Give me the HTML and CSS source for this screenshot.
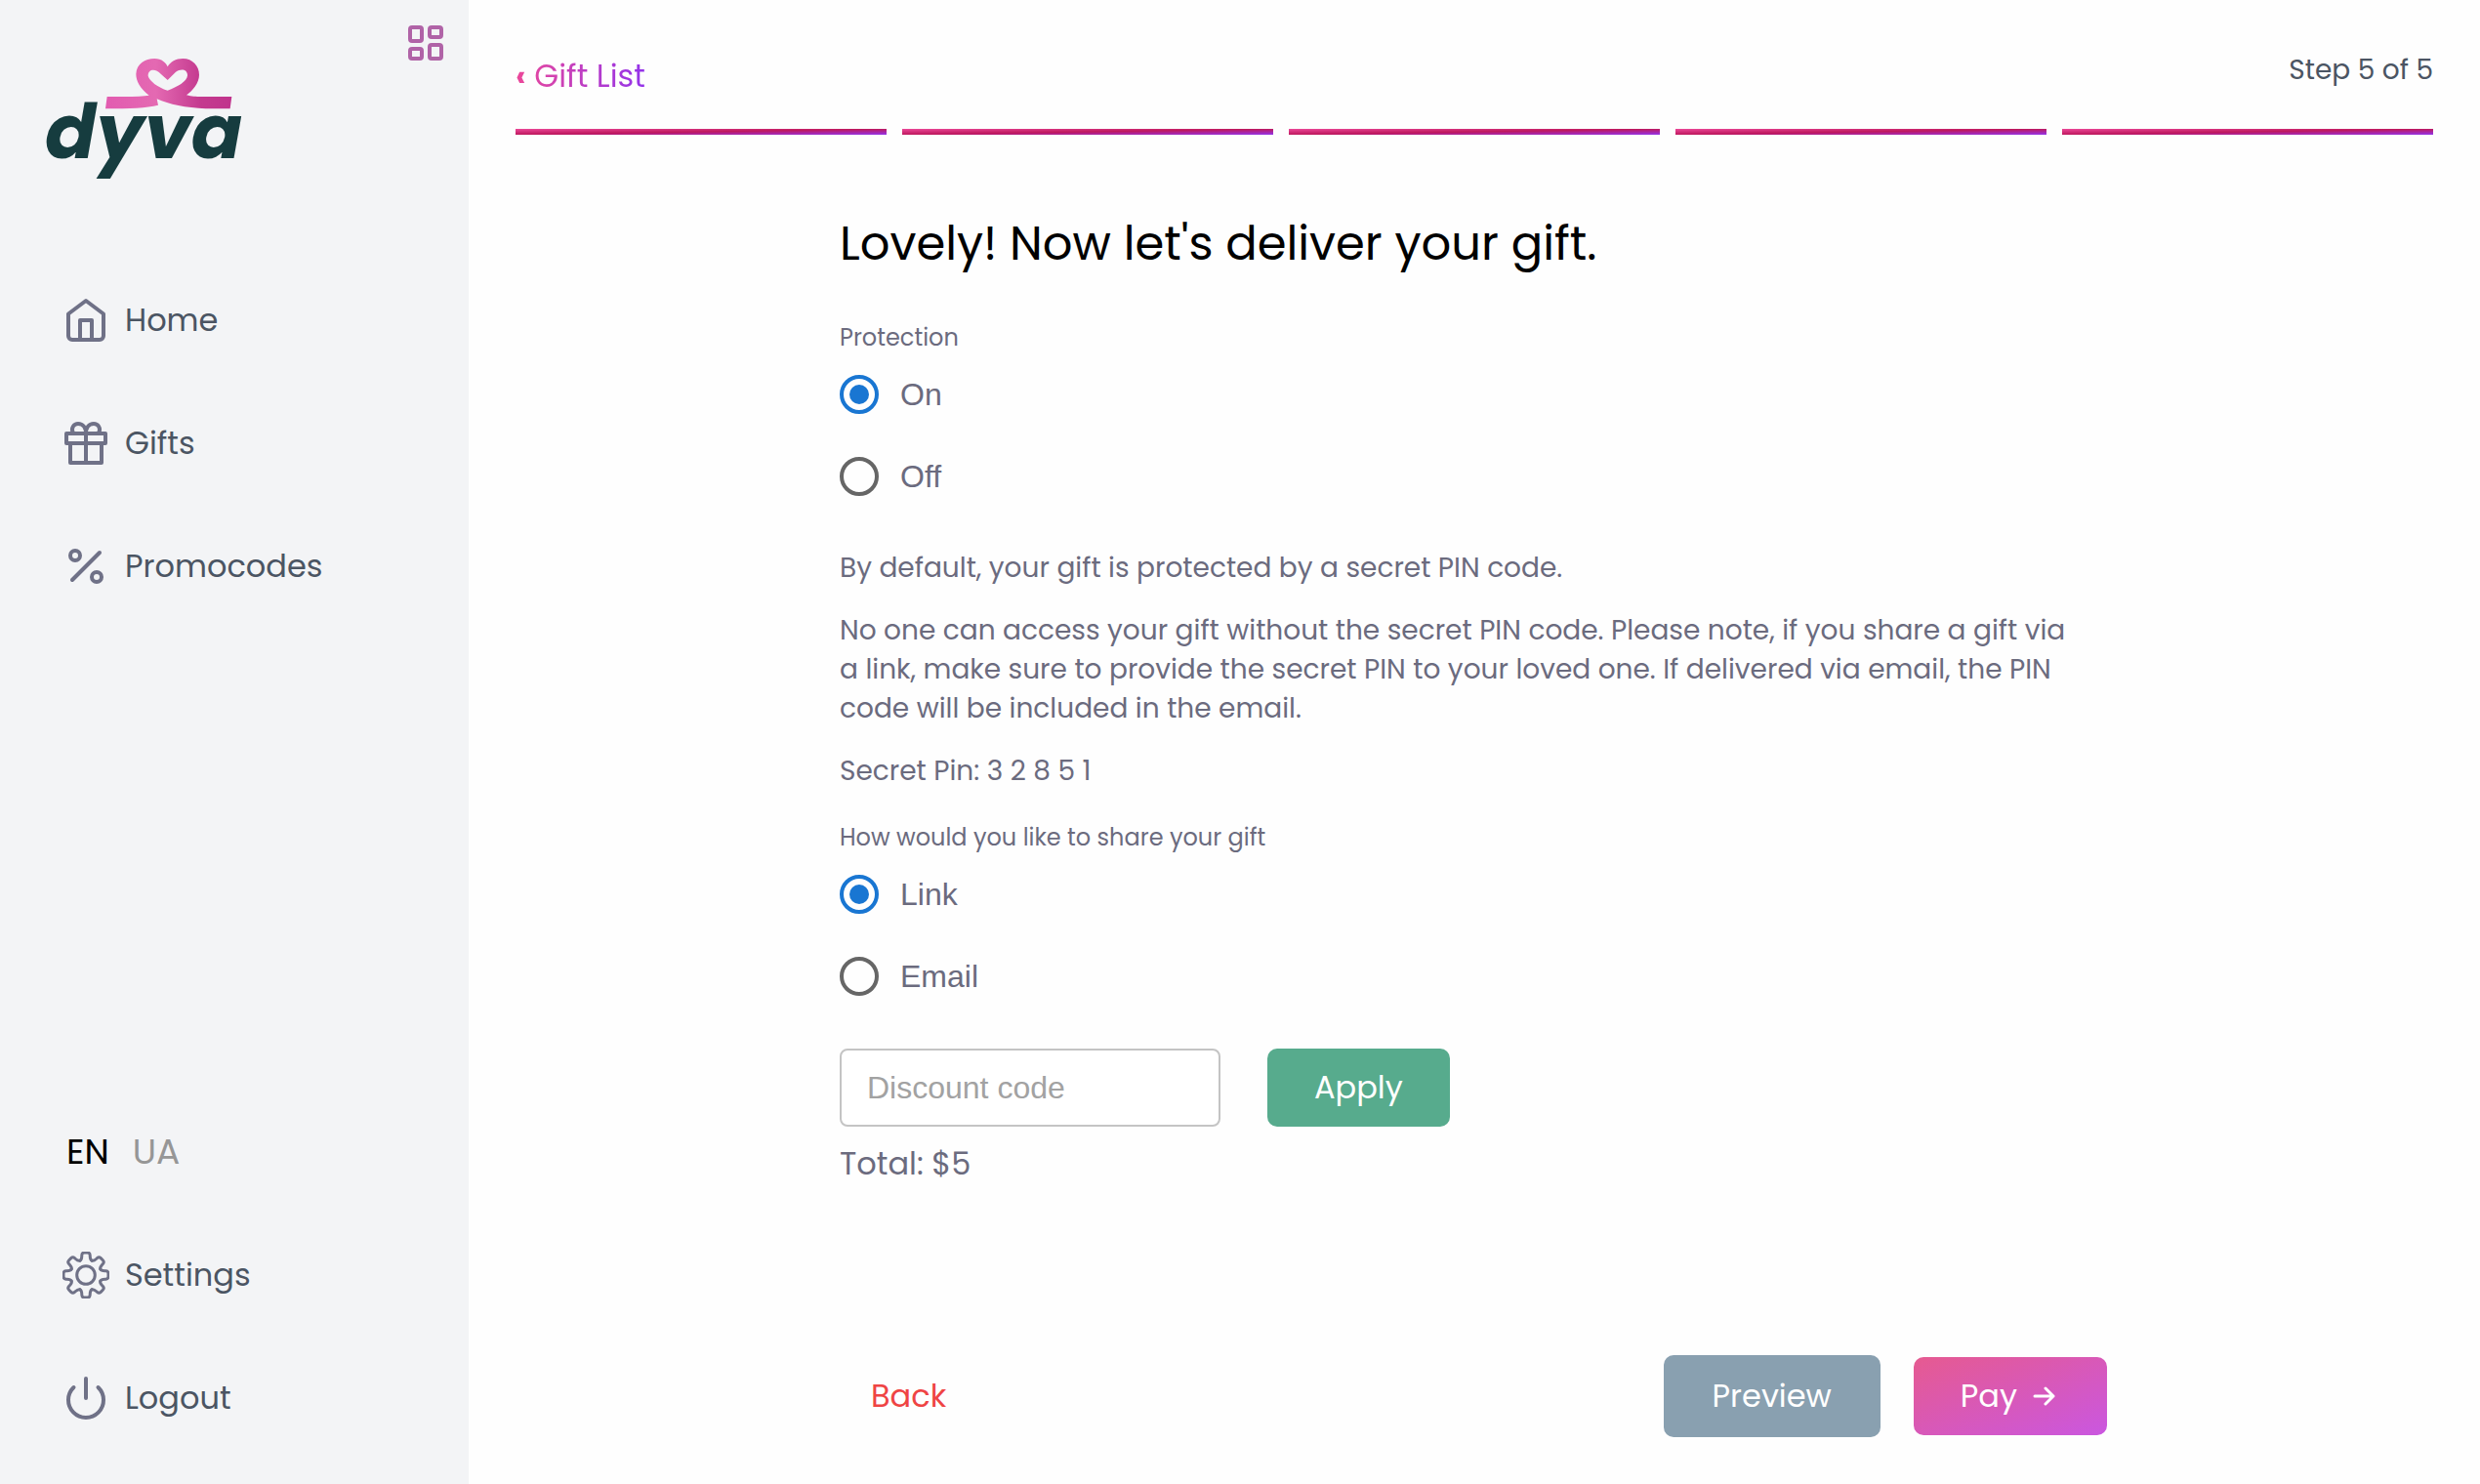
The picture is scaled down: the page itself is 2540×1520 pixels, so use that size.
FILE: index.html
```
<!DOCTYPE html>
<html lang="en">
<head>
    <meta charset="UTF-8">
    <meta name="viewport" content="width=device-width, initial-scale=1.0">
    <title>Dyva - Gift delivery</title>
    <link rel="stylesheet" href="styles.css">
</head>
<body>
    <div class="layout">
        <aside class="sidebar">
            <div class="sidebar-top">
                <a href="#" class="logo" aria-label="dyva">
                    <svg width="198" height="120" viewBox="144 180 594 360">
                        <defs>
                            <linearGradient id="ribbon" x1="0" y1="0" x2="1" y2="0">
                                <stop offset="0" stop-color="#e25bb0"/>
                                <stop offset="0.4" stop-color="#e469b2"/>
                                <stop offset="0.75" stop-color="#c43a8f"/>
                                <stop offset="1" stop-color="#c0338c"/>
                            </linearGradient>
                        </defs>
                        <path fill="url(#ribbon)" fill-rule="evenodd" d="M458 293C430 270 418 250 418 227C420 196 445 180 475 180C497 180 510 193 515 205C523 190 540 180 562 180C592 180 612 203 612 230C612 255 592 278 573 292C590 297 600 297 620 297H712L707 334H632C570 331 520 321 482 304L486 323C450 332 400 334 324 334L329 297H380Q435 297 458 293ZM515 246L494 227C478 210 455 212 455 233C460 250 485 268 515 278C545 268 575 250 576 232C576 212 555 211 540 221Z"/>
                        <text class="logo-text" x="138" y="487">dyva</text>
                    </svg>
                </a>
                <button class="menu-toggle" aria-label="Toggle menu">
                    <svg width="36" height="36" viewBox="0 0 36 36" fill="none" stroke="currentColor" stroke-width="4">
                        <rect x="2" y="2" width="12" height="14" rx="2"/>
                        <rect x="22" y="2" width="12" height="10" rx="2"/>
                        <rect x="2" y="24" width="12" height="10" rx="2"/>
                        <rect x="22" y="20" width="12" height="14" rx="2"/>
                    </svg>
                </button>
            </div>

            <nav class="nav">
                <a href="#" class="nav-link">
                    <svg class="icon" viewBox="0 0 48 48">
                        <path d="M6 17.5L24 4L42 17.5V40a4 4 0 0 1-4 4H10a4 4 0 0 1-4-4Z"/>
                        <path d="M18 44V24H30V44"/>
                    </svg>
                    Home
                </a>
                <a href="#" class="nav-link">
                    <svg class="icon" viewBox="0 0 48 48">
                        <path d="M4 14H44V24H4ZM8 24V44H40V24M24 14V44"/>
                        <path d="M11 14C8 8 12 4 16 4C21 4 24 8 24 14C24 8 27 4 32 4C36 4 40 8 37 14"/>
                    </svg>
                    Gifts
                </a>
                <a href="#" class="nav-link">
                    <svg class="icon" viewBox="0 0 48 48">
                        <circle cx="13" cy="13" r="5"/>
                        <circle cx="35" cy="35" r="5"/>
                        <path d="M10 38L38 10"/>
                    </svg>
                    Promocodes
                </a>
            </nav>

            <div class="nav nav-bottom">
                <div class="languages">
                    <button class="language active">EN</button>
                    <button class="language">UA</button>
                </div>
                <a href="#" class="nav-link">
                    <svg class="icon icon-thin" viewBox="-24 -24 48 48">
                        <defs>
                            <path id="tooth" d="M-6.1 -14.8C-4.6 -15.5 -4.3 -17 -4.2 -19.5V-20.5Q-4 -23 -1.5 -23H1.5Q4 -23 4.2 -20.5V-19.5C4.3 -17 4.6 -15.5 6.1 -14.8"/>
                        </defs>
                        <use href="#tooth"/>
                        <use href="#tooth" transform="rotate(45)"/>
                        <use href="#tooth" transform="rotate(90)"/>
                        <use href="#tooth" transform="rotate(135)"/>
                        <use href="#tooth" transform="rotate(180)"/>
                        <use href="#tooth" transform="rotate(225)"/>
                        <use href="#tooth" transform="rotate(270)"/>
                        <use href="#tooth" transform="rotate(315)"/>
                        <circle r="9.3"/>
                    </svg>
                    Settings
                </a>
                <a href="#" class="nav-link">
                    <svg class="icon" viewBox="0 0 48 48">
                        <path d="M24 4V24M11.5 13A18 18 0 1 0 36.5 13"/>
                    </svg>
                    Logout
                </a>
            </div>
        </aside>

        <main class="main">
            <header class="header">
                <a href="#" class="back-link"><b>‹</b> Gift List</a>
                <span class="step">Step 5 of 5</span>
            </header>
            <div class="progress">
                <span></span>
                <span></span>
                <span></span>
                <span></span>
                <span></span>
            </div>

            <form class="content">
                <h1>Lovely! Now let's deliver your gift.</h1>

                <fieldset class="options">
                    <legend>Protection</legend>
                    <label class="option">
                        <input type="radio" name="protection" value="on" checked>
                        On
                    </label>
                    <label class="option">
                        <input type="radio" name="protection" value="off">
                        Off
                    </label>
                </fieldset>

                <div class="info">
                    <p>By default, your gift is protected by a secret PIN code.</p>
                    <p>No one can access your gift without the secret PIN code. Please note, if you share a gift via a link, make sure to provide the secret PIN to your loved one. If delivered via email, the PIN code will be included in the email.</p>
                    <p>Secret Pin: 3 2 8 5 1</p>
                </div>

                <fieldset class="options">
                    <legend>How would you like to share your gift</legend>
                    <label class="option">
                        <input type="radio" name="share" value="link" checked>
                        Link
                    </label>
                    <label class="option">
                        <input type="radio" name="share" value="email">
                        Email
                    </label>
                </fieldset>

                <div class="discount">
                    <input type="text" class="discount-input" placeholder="Discount code" aria-label="Discount code">
                    <button type="button" class="btn btn-apply">Apply</button>
                </div>
                <p class="total">Total: $5</p>

                <div class="actions">
                    <button type="button" class="btn-back">Back</button>
                    <button type="button" class="btn btn-preview">Preview</button>
                    <button type="submit" class="btn btn-pay">
                        Pay
                        <svg width="28" height="20" viewBox="0 0 28 20">
                            <path d="M2 10H21M13 2L21 10L13 18"/>
                        </svg>
                    </button>
                </div>
            </form>
        </main>
    </div>
</body>
</html>
```

FILE: styles.css
```
* {
    box-sizing: border-box;
}

body {
    margin: 0;
    font-family: Poppins, Inter, sans-serif;
    font-size: 32px;
    line-height: 48px;
    color: #6b6b7e;
    background-color: #fefefe;
}

a {
    color: inherit;
    text-decoration: none;
}

button {
    font: inherit;
    border: none;
    padding: 0;
    background: none;
    cursor: pointer;
}

svg {
    display: block;
}

.layout {
    display: flex;
    min-height: 100vh;
}

/* Sidebar */
.sidebar {
    display: flex;
    flex-direction: column;
    flex: 0 0 480px;
    padding: 26px 26px 64px 48px;
    background-color: #f3f4f6;
    color: #4b5563;
}

.sidebar-top {
    display: flex;
    justify-content: space-between;
    align-items: flex-start;
}

.logo {
    padding-top: 34px;
}

.logo svg {
    overflow: visible;
}

.logo-text {
    font-size: 232px;
    font-weight: 700;
    font-style: italic;
    fill: #163c3f;
}

.menu-toggle {
    color: #b063a7;
}

.nav {
    display: flex;
    flex-direction: column;
    gap: 78px;
    margin-top: 124px;
    padding-left: 16px;
}

.nav-bottom {
    margin-top: auto;
}

.nav-link {
    display: flex;
    align-items: center;
    gap: 16px;
}

.icon {
    width: 48px;
    height: 48px;
    fill: none;
    stroke: #6f7187;
    stroke-width: 4;
    stroke-linecap: round;
    stroke-linejoin: round;
}

.icon-thin {
    stroke-width: 3;
}

.languages {
    display: flex;
    gap: 24px;
    padding-left: 4px;
    font-size: 36px;
}

.language {
    color: #969696;
}

.language.active {
    color: #000;
}

/* Main */
.main {
    flex: 1;
    padding: 48px;
}

.header {
    display: flex;
    justify-content: space-between;
    align-items: flex-start;
    height: 84px;
}

.back-link {
    padding-top: 6px;
    background: linear-gradient(to right, #ec4899, #9333ea);
    -webkit-background-clip: text;
    background-clip: text;
    color: transparent;
}

.step {
    font-size: 28px;
    color: #4b5563;
}

.progress {
    display: flex;
    gap: 16px;
}

.progress span {
    flex: 1;
    height: 6px;
    background: linear-gradient(to bottom right, #ec4899, #be185d, #9333ea);
}

.content {
    max-width: 1300px;
    margin: 76px auto 0;
}

h1 {
    margin: 0 0 44px;
    font-size: 48px;
    line-height: 72px;
    font-weight: 400;
    color: #000;
}

.options {
    margin: 0;
    padding: 0;
    border: none;
}

.options legend {
    padding: 0;
    font-size: 24px;
    line-height: 32px;
}

.option {
    display: flex;
    align-items: center;
    gap: 22px;
    height: 84px;
    font-family: "Liberation Sans", Arial, sans-serif;
}

.option input {
    appearance: none;
    display: grid;
    place-content: center;
    width: 40px;
    height: 40px;
    margin: 0;
    border: 4px solid #666;
    border-radius: 50%;
}

.option input:checked {
    border-color: #1976d2;
}

.option input:checked::before {
    content: "";
    width: 20px;
    height: 20px;
    border-radius: 50%;
    background-color: #1976d2;
}

.info {
    max-width: 1272px;
    margin: 32px 0;
    font-size: 28px;
    line-height: 40px;
}

.info p {
    margin: 0 0 24px;
}

.info p:last-child {
    margin-bottom: 0;
}

.discount {
    display: flex;
    gap: 48px;
    margin-top: 32px;
}

.discount-input {
    width: 390px;
    height: 80px;
    padding: 0 26px;
    border: 2px solid #c4c4c4;
    border-radius: 8px;
    font-family: "Liberation Sans", Arial, sans-serif;
    font-size: 32px;
    background-color: #fff;
}

.discount-input::placeholder {
    color: #a2a2a2;
}

.btn {
    height: 80px;
    padding: 0 48px;
    border-radius: 10px;
    color: #fff;
}

.btn-apply {
    background-color: #57ab8d;
}

.total {
    margin: 14px 0 0;
}

.actions {
    display: flex;
    align-items: center;
    gap: 34px;
    margin-top: 172px;
    padding: 0 2px 0 32px;
}

.btn-back {
    margin-right: auto;
    color: #ef4444;
}

.btn-preview {
    height: 84px;
    padding: 0 50px;
    background-color: #89a0b0;
}

.btn-pay {
    display: flex;
    align-items: center;
    gap: 16px;
    background: linear-gradient(to bottom right, #e65a90, #ca57e0);
}

.btn-pay svg {
    fill: none;
    stroke: currentColor;
    stroke-width: 3;
    stroke-linecap: round;
    stroke-linejoin: round;
}
```
